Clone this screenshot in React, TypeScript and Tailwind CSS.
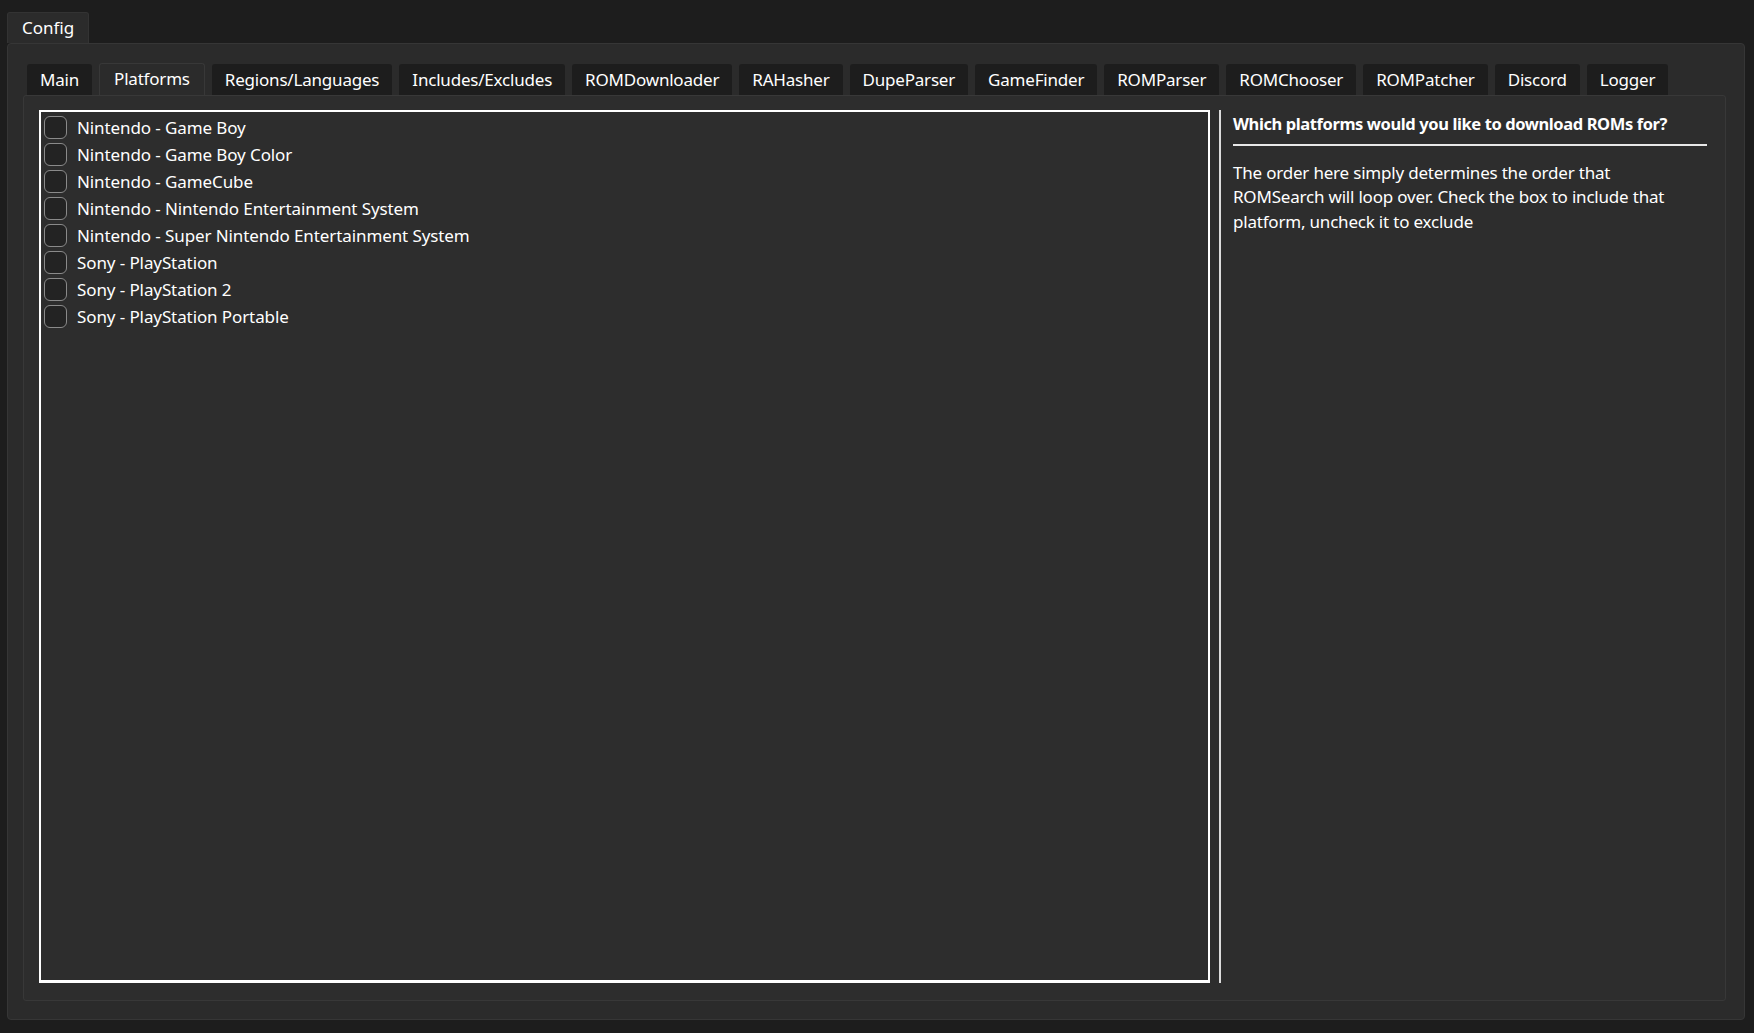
export default function App() {
  const tabs = ["Main","Platforms","Regions/Languages","Includes/Excludes","ROMDownloader","RAHasher","DupeParser","GameFinder","ROMParser","ROMChooser","ROMPatcher","Discord","Logger"];
  const items = ["Nintendo - Game Boy","Nintendo - Game Boy Color","Nintendo - GameCube","Nintendo - Nintendo Entertainment System","Nintendo - Super Nintendo Entertainment System","Sony - PlayStation","Sony - PlayStation 2","Sony - PlayStation Portable"];
  return (
    <div className="w-[1754px] h-[1033px] bg-[#1d1d1d] text-white flex flex-col pt-[12px] pl-[7px] pr-[9px] pb-[13px]" style={{fontFamily:'"Noto Sans","Open Sans",sans-serif'}}>
      <div className="flex">
        <div className="h-[31px] px-[14px] flex items-center bg-[#2b2b2b] border border-[#333] border-b-0 rounded-t-[3px] text-[17px]">Config</div>
      </div>
      <div className="flex-1 bg-[#2b2b2b] border border-[#363636] rounded-[4px] flex flex-col pt-[19px] pl-[15px] pr-[18px] pb-[18px]">
        <div className="flex gap-[7px] pl-[4px] items-end h-[32px]">
          {tabs.map(t => t === "Platforms" ? (
            <div key={t} className="h-[32px] px-[14px] flex items-start pt-[2px] bg-[#2b2b2b] border border-[#383838] border-b-0 rounded-t-[3px] text-[17px] tracking-[-0.2px]">{t}</div>
          ) : (
            <div key={t} className="h-[31px] px-[13px] flex items-center bg-[#1d1d1d] rounded-t-[3px] text-[17px] tracking-[-0.2px]">{t}</div>
          ))}
        </div>
        <div className="flex-1 bg-[#2d2d2d] border border-[#383838] rounded-[3px] flex pt-[14px] pl-[15px] pr-[18px] pb-[17px]">
          <div className="w-[1171px] border-[2px] border-white border-b-[3px] flex flex-col pt-[2px] pl-[3px]">
            {items.map(i => (
              <div key={i} className="h-[27px] flex items-center">
                <div className="w-[23px] h-[23px] rounded-[6px] border-[1.5px] border-[#8a8a8a] bg-[#232323] mr-[10px]" />
                <span className="text-[17px] leading-none tracking-[-0.1px]">{i}</span>
              </div>
            ))}
          </div>
          <div className="w-[2px] bg-[#dcdcdc] ml-[9px]" />
          <div className="flex-1 pl-[12px] pt-[2px]">
            <div className="text-[16.5px] font-bold pb-[7px] border-b-2 border-[#e8e8e8] tracking-[-0.4px] whitespace-nowrap">Which platforms would you like to download ROMs for?</div>
            <div className="text-[17px] leading-[24.5px] mt-[15px] pr-[10px] tracking-[-0.2px]">The order here simply determines the order that ROMSearch will loop over. Check the box to include that platform, uncheck it to exclude</div>
          </div>
        </div>
      </div>
    </div>
  );
}
